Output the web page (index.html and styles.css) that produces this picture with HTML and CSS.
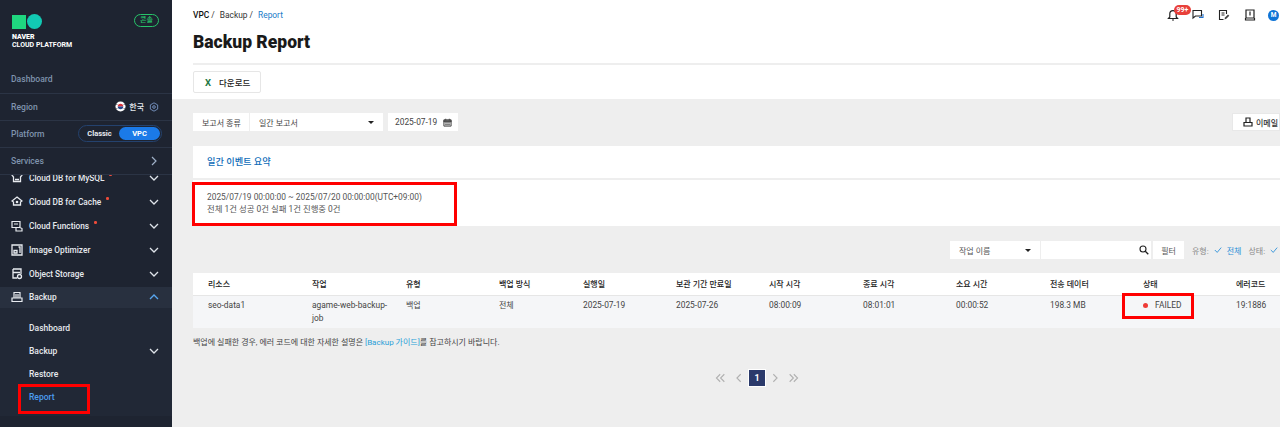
FILE: index.html
```html
<!DOCTYPE html>
<html lang="ko">
<head>
<meta charset="utf-8">
<title>Backup Report</title>
<link rel="stylesheet" href="styles.css">
</head>
<body>
<aside class="sidebar">
  <div class="brand">
    <div class="brand-left">
      <div class="logo"><span class="logo-square"></span><span class="logo-circle"></span></div>
      <div class="logo-text"><b>NAVER</b><br>CLOUD PLATFORM</div>
    </div>
    <span class="env-badge">콘솔</span>
  </div>
  <div class="side-row side-row-first">Dashboard</div>
  <div class="side-row">
    <span>Region</span>
    <span class="region">
      <svg class="flag" viewBox="0 0 12 12"><circle cx="6" cy="6" r="5.500" fill="#fff"/><path d="M3 6a3 3 0 0 1 6 0z" fill="#d8343c"/><path d="M3 6a3 3 0 0 0 6 0z" fill="#26478c"/><path d="M1.600 3.400l1 1M1.600 8.600l1-1M10.400 3.400l-1 1M10.400 8.600l-1-1" stroke="#222" stroke-width=".9"/></svg>
      <span class="region-name">한국</span>
      <svg class="gear" viewBox="0 0 12 12"><path d="M6 1l4.400 2.500v5L6 11 1.600 8.500v-5z" fill="none" stroke="#7f9fd0" stroke-width="1"/><circle cx="6" cy="6" r="1.600" fill="none" stroke="#7f9fd0"/></svg>
    </span>
  </div>
  <div class="side-row">
    <span>Platform</span>
    <span class="platform"><span class="pf-off">Classic</span><span class="pf-on">VPC</span></span>
  </div>
  <div class="side-row">
    <span>Services</span>
    <svg class="chev" viewBox="0 0 10 10"><path d="M3 1l4 4-4 4" fill="none" stroke="#9fb0c8" stroke-width="1.200"/></svg>
  </div>
  <nav class="menu">
    <div class="menu-inner">
      <div class="item"><svg class="ico" viewBox="0 0 12 12"><path d="M1 3l2-1.500h6L11 3 9.500 5v4.500h-7V5zM4 7.500h4" fill="none" stroke="#e8ebf0" stroke-width="1.300"/></svg><span class="item-name">Cloud DB for MySQL</span><i class="dot"></i><svg class="down" viewBox="0 0 10 10"><path d="M1 3l4 4 4-4" fill="none" stroke="#dfe4ea" stroke-width="1.300"/></svg></div>
      <div class="item"><svg class="ico" viewBox="0 0 12 12"><path d="M6 1l5 4-1.500 1v3h-7V6L1 5z" fill="none" stroke="#e8ebf0" stroke-width="1.300"/><circle cx="6" cy="6" r="1.300" fill="#e8ebf0"/></svg><span class="item-name">Cloud DB for Cache</span><i class="dot"></i><svg class="down" viewBox="0 0 10 10"><path d="M1 3l4 4 4-4" fill="none" stroke="#dfe4ea" stroke-width="1.300"/></svg></div>
      <div class="item"><svg class="ico" viewBox="0 0 12 12"><path d="M1 1.500h8v6H1zM3 4h4M8 7l3 1.500V11H5V7.500" fill="none" stroke="#e8ebf0" stroke-width="1.200"/></svg><span class="item-name">Cloud Functions</span><i class="dot"></i><svg class="down" viewBox="0 0 10 10"><path d="M1 3l4 4 4-4" fill="none" stroke="#dfe4ea" stroke-width="1.300"/></svg></div>
      <div class="item"><svg class="ico" viewBox="0 0 12 12"><path d="M1 1h10v10H1zM3 6.500h3v2.500H3zM7.500 3h1.500v6" fill="none" stroke="#e8ebf0" stroke-width="1.300"/></svg><span class="item-name">Image Optimizer</span><svg class="down" viewBox="0 0 10 10"><path d="M1 3l4 4 4-4" fill="none" stroke="#dfe4ea" stroke-width="1.300"/></svg></div>
      <div class="item"><svg class="ico" viewBox="0 0 12 12"><path d="M2 1h8v5M2 1v9h4M2 4.500h7" fill="none" stroke="#e8ebf0" stroke-width="1.300"/><circle cx="8.500" cy="8.500" r="2" fill="none" stroke="#e8ebf0" stroke-width="1.300"/></svg><span class="item-name">Object Storage</span><svg class="down" viewBox="0 0 10 10"><path d="M1 3l4 4 4-4" fill="none" stroke="#dfe4ea" stroke-width="1.300"/></svg></div>
      <div class="item item-open"><svg class="ico" viewBox="0 0 12 12"><path d="M3 7V1.500h6V7M1 7h10v3.500H1zM5 3v4M7 3v4" fill="none" stroke="#e8ebf0" stroke-width="1.200"/></svg><span class="item-name">Backup</span><svg class="down" viewBox="0 0 10 10"><path d="M1 7l4-4 4 4" fill="none" stroke="#58a6f0" stroke-width="1.300"/></svg></div>
      <div class="submenu">
        <div class="sub">Dashboard</div>
        <div class="sub"><span class="item-name">Backup</span><svg class="down" viewBox="0 0 10 10"><path d="M1 3l4 4 4-4" fill="none" stroke="#dfe4ea" stroke-width="1.300"/></svg></div>
        <div class="sub">Restore</div>
        <div class="sub sub-active">Report</div>
        <span class="mark mark-report"></span>
      </div>
    </div>
  </nav>
</aside>

<main class="main">
  <header class="head">
    <div class="topline">
      <div class="crumbs"><b>VPC</b> /<span class="crumb">Backup /</span><span class="crumb crumb-now">Report</span></div>
      <div class="tools">
        <span class="tool tool-bell">
          <svg viewBox="0 0 12 12"><path d="M1.500 9.500h9L9.200 8V4.800a3.200 3.200 0 0 0-6.400 0V8zM5 11h2" fill="none" stroke="#222" stroke-width="1.200"/></svg>
          <span class="count">99+</span>
        </span>
        <svg class="tool" viewBox="0 0 12 12"><path d="M1 1.500h8.500v5.500H3.500L1 9z" fill="none" stroke="#222" stroke-width="1.100"/><path d="M7 8.500h4V5" fill="none" stroke="#1a6fd0" stroke-width="1.100"/></svg>
        <svg class="tool" viewBox="0 0 12 12"><path d="M8.500 5V1.500h-7v9h4M3.500 4h3M3.500 6h3" fill="none" stroke="#222" stroke-width="1.100"/><path d="M6.500 10.500l.5-2 3-3 1.300 1.300-3 3z" fill="#444"/></svg>
        <svg class="tool" viewBox="0 0 12 12"><path d="M2 1h8v8H2zM1.500 9v2h9V9M6 2.500v4" fill="none" stroke="#222" stroke-width="1.200"/></svg>
        <span class="avatar">M</span>
      </div>
    </div>
    <h1 class="title">Backup Report</h1>
    <div class="actions">
      <button class="btn-download"><span class="excel">X</span>다운로드</button>
    </div>
  </header>

  <section class="content">
    <div class="toolbar">
      <span class="field field-label">보고서 종류</span>
      <span class="field field-select">일간 보고서<i class="caret"></i></span>
      <span class="field field-date">2025-07-19
        <svg class="cal" viewBox="0 0 10 10"><path d="M1 2h8v7H1z" fill="none" stroke="#444" stroke-width="1.100"/><path d="M1 3h8v1.200H1zM2 5.500h6M2 7.500h6M3 .8v2M7 .8v2" stroke="#444" fill="#444"/></svg>
      </span>
      <button class="btn-email">
        <svg class="print" viewBox="0 0 10 10"><path d="M3 5V1h4v4M1 5.500h8V9H1z" fill="none" stroke="#222" stroke-width="1.200"/></svg>이메일
      </button>
    </div>

    <div class="summary-title">일간 이벤트 요약</div>
    <div class="summary-body">
      <div>2025/07/19 00:00:00 ~ 2025/07/20 00:00:00(UTC+09:00)</div>
      <div>전체 1건 성공 0건 실패 1건 진행중 0건</div>
      <span class="mark mark-summary"></span>
    </div>

    <div class="filters">
      <span class="field field-name">작업 이름<i class="caret"></i></span>
      <span class="field field-search"><svg class="search" viewBox="0 0 10 10"><circle cx="4" cy="4" r="3" fill="none" stroke="#222" stroke-width="1.100"/><path d="M6.300 6.300L9.300 9.300" stroke="#222" stroke-width="1.300"/></svg></span>
      <span class="field field-filter">필터</span>
      <span class="chips">유형:<svg class="check" viewBox="0 0 10 10"><path d="M1 5l3 3 5-6" fill="none" stroke="#2a8fd8" stroke-width="1.100"/></svg><span class="chip-on">전체</span><span class="chip-next">상태:</span><svg class="check" viewBox="0 0 10 10"><path d="M1 5l3 3 5-6" fill="none" stroke="#2a8fd8" stroke-width="1.100"/></svg></span>
    </div>

    <table class="report">
      <colgroup>
        <col class="c1"><col class="c2"><col class="c3"><col class="c4"><col class="c5"><col class="c6"><col class="c7"><col class="c8"><col class="c9"><col class="c10"><col class="c11"><col class="c12">
      </colgroup>
      <thead>
        <tr><th>리소스</th><th>작업</th><th>유형</th><th>백업 방식</th><th>실행일</th><th>보관 기간 만료일</th><th>시작 시각</th><th>종료 시각</th><th>소요 시간</th><th>전송 데이터</th><th>상태</th><th>에러코드</th></tr>
      </thead>
      <tbody>
        <tr>
          <td>seo-data1</td><td>agame-web-backup-job</td><td class="ko">백업</td><td class="ko">전체</td><td>2025-07-19</td><td>2025-07-26</td><td>08:00:09</td><td>08:01:01</td><td>00:00:52</td><td>198.3 MB</td>
          <td class="status"><i class="status-dot"></i>FAILED<span class="mark mark-status"></span></td>
          <td>19:1886</td>
        </tr>
      </tbody>
    </table>

    <p class="note">백업에 실패한 경우, 에러 코드에 대한 자세한 설명은 <span class="link">[Backup 가이드]</span>를 참고하시기 바랍니다.</p>

    <div class="pager">
      <svg class="pg" viewBox="0 0 18 12"><path d="M8 1.500L3.500 6 8 10.500M13 1.500L8.500 6l4.500 4.500" fill="none" stroke="#b0b0b0" stroke-width="1.300"/></svg>
      <svg class="pg" viewBox="0 0 18 12"><path d="M11 1.500L6.500 6l4.500 4.500" fill="none" stroke="#b0b0b0" stroke-width="1.300"/></svg>
      <span class="pg-now">1</span>
      <svg class="pg" viewBox="0 0 18 12"><path d="M7 1.500L11.500 6 7 10.500" fill="none" stroke="#b0b0b0" stroke-width="1.300"/></svg>
      <svg class="pg" viewBox="0 0 18 12"><path d="M5 1.500L9.500 6 5 10.500M10 1.500L14.500 6 10 10.500" fill="none" stroke="#b0b0b0" stroke-width="1.300"/></svg>
    </div>
  </section>
</main>
</body>
</html>
```

FILE: styles.css
```css
* { box-sizing: border-box; }
html, body { margin: 0; height: 427px; overflow: hidden; }
body {
  display: flex;
  width: 1280px;
  font-family: Roboto, "Noto Sans CJK KR", sans-serif;
  font-size: 8.400px;
  color: #333;
  background: #eee;
}

/* sidebar */
.sidebar {
  width: 172px;
  flex: none;
  height: 427px;
  background: #1e2431;
  color: #7f93ad;
  display: flex;
  flex-direction: column;
}
.brand {
  display: flex;
  justify-content: space-between;
  height: 66px;
  padding: 14px 13px 0 12px;
}
.logo { display: flex; align-items: center; height: 15px; gap: 1px; }
.logo-square { width: 14px; height: 14px; background: #1fd67f; }
.logo-circle { width: 15px; height: 15px; border-radius: 50%; background: #12c9b3; }
.logo-text { margin-top: 5px; font-size: 7px; line-height: 7.500px; color: #fff; font-weight: 700; white-space: nowrap; }
.logo-text b { font-weight: 900; }
.env-badge {
  width: 25px;
  height: 13px;
  border: 1px solid #27c46a;
  border-radius: 7px;
  color: #27c46a;
  font-size: 7px;
  font-weight: 500;
  line-height: 11px;
  text-align: center;
}
.side-row {
  display: flex;
  align-items: center;
  justify-content: space-between;
  height: 27px;
  padding: 0 13px 0 11px;
  font-size: 8.600px;
  font-weight: 500;
  border-bottom: 1px solid #2b3445;
}
.side-row-first { height: 27.500px; }
.region { display: flex; align-items: center; }
.flag { width: 11px; height: 11px; }
.region-name { margin: 0 5px 0 3px; color: #e6e9ee; font-size: 8px; }
.gear { width: 10px; height: 10px; }
.platform {
  display: flex;
  width: 84px;
  height: 17px;
  padding: 1px;
  margin-right: -3px;
  border: 1px solid #24426e;
  border-radius: 9px;
  font-size: 7.500px;
  font-weight: 700;
  line-height: 13px;
  text-align: center;
}
.pf-off { flex: 1; color: #e8ebf0; }
.pf-on { width: 41px; border-radius: 7px; background: #1b7ae8; color: #fff; }
.chev { width: 10px; height: 10px; }

.menu { flex: 1; overflow: hidden; min-height: 0; color: #e6e9ee; font-weight: 500; font-size: 8.300px; }
.menu-inner { margin-top: -8px; }
.item {
  display: flex;
  align-items: center;
  height: 23.800px;
  padding: 0 13px 0 11px;
}
.ico { width: 12px; height: 12px; margin-right: 6px; flex: none; }
.dot { width: 2.500px; height: 2.500px; margin: -7px 0 0 5px; border-radius: 50%; background: #ee4b3a; }
.down { width: 10px; height: 10px; margin-left: auto; flex: none; }
.item-open { height: 20.500px; margin-top: 2px; padding-bottom: 1px; background: #28303f; }
.submenu { position: relative; padding: 8px 13px 8px 29px; background: #212836; height: 108.500px; font-size: 8.500px; }
.sub { display: flex; align-items: center; height: 23.200px; }
.sub-active { color: #4c9df0; }

/* red annotation boxes */
.mark { position: absolute; border: 3px solid #f00; pointer-events: none; }
.mark-report { left: 18px; top: 76px; width: 72px; height: 30px; }

/* main */
.main { flex: 1; min-width: 0; display: flex; flex-direction: column; }
.head { height: 99px; background: #fff; padding: 0 0 0 21px; flex: none; }
.topline { display: flex; justify-content: space-between; height: 30px; padding-top: 9px; }
.crumbs { line-height: 13px; color: #333; }
.crumbs b { font-weight: 500; color: #111; }
.crumb { margin-left: 5px; }
.crumb-now { color: #1a7cc8; }
.tools { display: flex; align-items: center; height: 12px; padding-right: 1px; }
.tool { display: block; width: 12px; height: 12px; margin-left: 14px; flex: none; }
.tool-bell { position: relative; margin-left: 0; }
.tool-bell svg { display: block; width: 12px; height: 12px; }
.count {
  position: absolute;
  left: 7px;
  top: -4px;
  width: 17px;
  height: 10px;
  border-radius: 5px;
  background: #e8403a;
  color: #fff;
  font-size: 7px;
  font-weight: 700;
  line-height: 10px;
  text-align: center;
}
.tool-bell + .tool { margin-left: 13px; }
.avatar {
  width: 11px;
  height: 11px;
  margin-left: 12px;
  border-radius: 50%;
  background: #0f74d6;
  color: #fff;
  font-size: 6.500px;
  font-weight: 700;
  line-height: 11px;
  text-align: center;
}
.title {
  margin: 0;
  height: 35px;
  font-size: 17.500px;
  font-weight: 900;
  line-height: 25px;
  color: #1a1a1a;
  border-bottom: 2px solid #eee;
}
.actions { padding-top: 6px; }
.btn-download {
  display: flex;
  align-items: center;
  width: 68px;
  height: 22px;
  padding: 0 0 0 11px;
  border: 1px solid #e6e6e6;
  border-radius: 2px;
  background: #fff;
  font: 500 8.500px Roboto, "Noto Sans CJK KR", sans-serif;
  color: #222;
  text-align: left;
}
.excel { width: 14px; color: #1f7a45; font-weight: 700; font-size: 9.500px; }

.content { flex: 1; padding: 14px 0 0 21px; color: #444; }
.toolbar { display: flex; align-items: stretch; height: 18px; }
.field { display: flex; align-items: center; background: #fff; }
.field-label { width: 56px; padding-left: 9px; font-size: 8px; }
.field-select { width: 133px; margin-left: 1px; padding-left: 9px; position: relative; font-size: 8px; }
.caret {
  position: absolute;
  right: 9px;
  top: 50%;
  margin-top: -1.500px;
  border: 3px solid transparent;
  border-top: 3.500px solid #222;
  border-bottom: 0;
}
.field-date { width: 70px; margin-left: 5px; padding-left: 7px; gap: 6px; }
.cal { width: 9px; height: 9px; }
.btn-email {
  display: flex;
  align-items: center;
  margin-left: auto;
  width: 48px;
  padding: 0 0 0 10px;
  border: 1px solid #e8e8e8;
  background: #fff;
  font: 500 8px Roboto, "Noto Sans CJK KR", sans-serif;
  color: #333;
  white-space: nowrap;
}
.print { width: 10px; height: 10px; margin-right: 3px; flex: none; }

.summary-title {
  margin-top: 15px;
  height: 32px;
  padding-left: 14px;
  background: #fff;
  color: #0e6cb8;
  font-size: 9.200px;
  font-weight: 500;
  line-height: 31px;
}
.summary-body {
  position: relative;
  margin-top: 2px;
  height: 46px;
  padding: 10.500px 0 0 14px;
  background: #fff;
  line-height: 12.500px;
  color: #555;
}
.mark-summary { left: -1px; top: 2px; width: 265px; height: 44px; }

.filters { display: flex; height: 18px; margin-top: 15px; padding-left: 757px; white-space: nowrap; font-size: 8px; }
.field-name { flex: none; width: 90px; padding-left: 9px; position: relative; color: #555; }
.field-search { flex: none; width: 110px; margin-left: 1px; justify-content: flex-end; padding-right: 2px; }
.search { width: 10px; height: 10px; }
.field-filter { flex: none; width: 31px; margin-left: 2px; justify-content: center; color: #555; }
.chips { display: flex; align-items: center; margin-left: 8px; color: #888; }
.check { width: 8px; height: 8px; margin: 0 5px; flex: none; }
.chip-on { color: #2a8fd8; }
.chip-next { margin-left: 7px; }

.report { table-layout: fixed; width: 1160px; margin-top: 14px; border-collapse: collapse; }
.c1 { width: 119px; } .c2 { width: 94px; } .c3 { width: 93px; } .c4 { width: 84px; }
.c5 { width: 93px; } .c6 { width: 93px; } .c7 { width: 94px; } .c8 { width: 93px; }
.c9 { width: 94px; } .c10 { width: 93px; } .c11 { width: 93px; } .c12 { width: 117px; }
.report th {
  height: 22px;
  padding: 0;
  background: #fff;
  border-bottom: 1px solid #e6e6e6;
  color: #222;
  font-weight: 500;
  font-size: 8px;
  text-align: left;
}
.report td {
  height: 33px;
  padding: 3px 10px 0 0;
  background: #f5f6f8;
  vertical-align: top;
  line-height: 13px;
  color: #444;
}
.report .ko { font-size: 8px; }
.report th:first-child, .report td:first-child { padding-left: 15px; }
.status { position: relative; }
.status-dot {
  display: inline-block;
  width: 5px;
  height: 5px;
  margin-right: 7px;
  border-radius: 50%;
  background: #ef3b36;
}
.mark-status { left: -21px; top: -3px; width: 72px; height: 26px; }
.report .status { padding-right: 0; }

.note { margin: 8px 0 0; line-height: 13px; color: #444; font-size: 8px; }
.link { color: #2a9fd8; }

.pager { display: flex; align-items: center; justify-content: center; margin-top: 20px; width: 1128px; }
.pg { display: block; width: 18px; height: 10px; flex: none; }
.pg-now {
  width: 18px;
  height: 18px;
  background: #2b3a6b;
  border: 1px solid #fff;
  color: #fff;
  font-weight: 700;
  font-size: 9px;
  line-height: 16px;
  text-align: center;
}
```
